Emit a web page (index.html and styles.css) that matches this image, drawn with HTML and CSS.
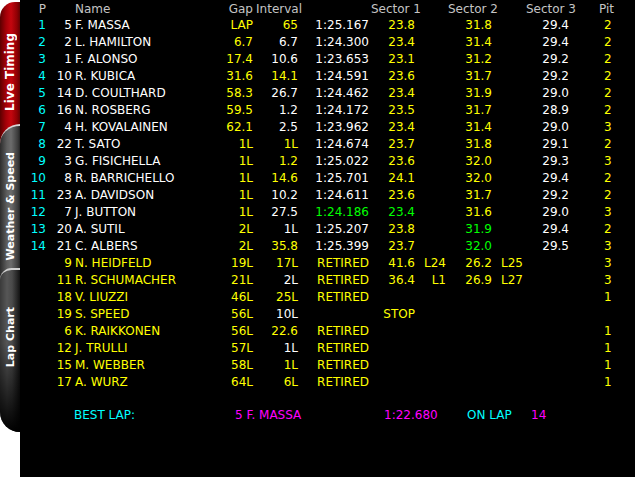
FILE: index.html
```html
<!DOCTYPE html>
<html lang="en">
<head>
    <meta charset="utf-8">
    <title>Live Timing</title>
    <link rel="stylesheet" href="styles.css">
</head>
<body>
<div class="screen">
    <nav class="tabs">
        <div class="tab tab-live"><span>Live Timing</span></div>
        <div class="tab tab-weather"><span>Weather &amp; Speed</span></div>
        <div class="tab tab-lap"><span>Lap Chart</span></div>
    </nav>

    <main class="timing">
        <div class="row head">
            <span>P</span><span></span><span class="name">Name</span><span>Gap</span>
            <span class="h-int">Interval</span><span></span>
            <span class="h-s1">Sector 1</span><span></span>
            <span class="h-s2">Sector 2</span><span></span>
            <span class="h-s3">Sector 3</span><span class="pit h-pit">Pit</span>
        </div>

        <div class="row"><span class="c">1</span><span class="w">5</span><span class="name w">F. MASSA</span><span class="y">LAP</span><span class="y">65</span><span class="w">1:25.167</span><span class="y">23.8</span><span></span><span class="y">31.8</span><span></span><span class="w">29.4</span><span class="pit y">2</span></div>
        <div class="row"><span class="c">2</span><span class="w">2</span><span class="name w">L. HAMILTON</span><span class="y">6.7</span><span class="w">6.7</span><span class="w">1:24.300</span><span class="y">23.4</span><span></span><span class="y">31.4</span><span></span><span class="w">29.4</span><span class="pit y">2</span></div>
        <div class="row"><span class="c">3</span><span class="w">1</span><span class="name w">F. ALONSO</span><span class="y">17.4</span><span class="w">10.6</span><span class="w">1:23.653</span><span class="y">23.1</span><span></span><span class="y">31.2</span><span></span><span class="w">29.2</span><span class="pit y">2</span></div>
        <div class="row"><span class="c">4</span><span class="w">10</span><span class="name w">R. KUBICA</span><span class="y">31.6</span><span class="y">14.1</span><span class="w">1:24.591</span><span class="y">23.6</span><span></span><span class="y">31.7</span><span></span><span class="w">29.2</span><span class="pit y">2</span></div>
        <div class="row"><span class="c">5</span><span class="w">14</span><span class="name w">D. COULTHARD</span><span class="y">58.3</span><span class="w">26.7</span><span class="w">1:24.462</span><span class="y">23.4</span><span></span><span class="y">31.9</span><span></span><span class="w">29.0</span><span class="pit y">2</span></div>
        <div class="row"><span class="c">6</span><span class="w">16</span><span class="name w">N. ROSBERG</span><span class="y">59.5</span><span class="w">1.2</span><span class="w">1:24.172</span><span class="y">23.5</span><span></span><span class="y">31.7</span><span></span><span class="w">28.9</span><span class="pit y">2</span></div>
        <div class="row"><span class="c">7</span><span class="w">4</span><span class="name w">H. KOVALAINEN</span><span class="y">62.1</span><span class="w">2.5</span><span class="w">1:23.962</span><span class="y">23.4</span><span></span><span class="y">31.4</span><span></span><span class="w">29.0</span><span class="pit y">3</span></div>
        <div class="row"><span class="c">8</span><span class="w">22</span><span class="name w">T. SATO</span><span class="y">1L</span><span class="y">1L</span><span class="w">1:24.674</span><span class="y">23.7</span><span></span><span class="y">31.8</span><span></span><span class="w">29.1</span><span class="pit y">2</span></div>
        <div class="row"><span class="c">9</span><span class="w">3</span><span class="name w">G. FISICHELLA</span><span class="y">1L</span><span class="y">1.2</span><span class="w">1:25.022</span><span class="y">23.6</span><span></span><span class="y">32.0</span><span></span><span class="w">29.3</span><span class="pit y">3</span></div>
        <div class="row"><span class="c">10</span><span class="w">8</span><span class="name w">R. BARRICHELLO</span><span class="y">1L</span><span class="y">14.6</span><span class="w">1:25.701</span><span class="y">24.1</span><span></span><span class="y">32.0</span><span></span><span class="w">29.4</span><span class="pit y">2</span></div>
        <div class="row"><span class="c">11</span><span class="w">23</span><span class="name w">A. DAVIDSON</span><span class="y">1L</span><span class="w">10.2</span><span class="w">1:24.611</span><span class="y">23.6</span><span></span><span class="y">31.7</span><span></span><span class="w">29.2</span><span class="pit y">2</span></div>
        <div class="row"><span class="c">12</span><span class="w">7</span><span class="name w">J. BUTTON</span><span class="y">1L</span><span class="w">27.5</span><span class="g">1:24.186</span><span class="g">23.4</span><span></span><span class="y">31.6</span><span></span><span class="w">29.0</span><span class="pit y">3</span></div>
        <div class="row"><span class="c">13</span><span class="w">20</span><span class="name w">A. SUTIL</span><span class="y">2L</span><span class="w">1L</span><span class="w">1:25.207</span><span class="y">23.8</span><span></span><span class="g">31.9</span><span></span><span class="w">29.4</span><span class="pit y">2</span></div>
        <div class="row"><span class="c">14</span><span class="w">21</span><span class="name w">C. ALBERS</span><span class="y">2L</span><span class="y">35.8</span><span class="w">1:25.399</span><span class="y">23.7</span><span></span><span class="g">32.0</span><span></span><span class="w">29.5</span><span class="pit y">3</span></div>

        <div class="row"><span></span><span class="y">9</span><span class="name y">N. HEIDFELD</span><span class="y">19L</span><span class="y">17L</span><span class="y">RETIRED</span><span class="y">41.6</span><span class="y">L24</span><span class="y">26.2</span><span class="lap y">L25</span><span></span><span class="pit y">3</span></div>
        <div class="row"><span></span><span class="y">11</span><span class="name y">R. SCHUMACHER</span><span class="y">21L</span><span class="w">2L</span><span class="y">RETIRED</span><span class="y">36.4</span><span class="y">L1</span><span class="y">26.9</span><span class="lap y">L27</span><span></span><span class="pit y">3</span></div>
        <div class="row"><span></span><span class="y">18</span><span class="name y">V. LIUZZI</span><span class="y">46L</span><span class="y">25L</span><span class="y">RETIRED</span><span></span><span></span><span></span><span></span><span></span><span class="pit y">1</span></div>
        <div class="row"><span></span><span class="y">19</span><span class="name y">S. SPEED</span><span class="y">56L</span><span class="w">10L</span><span></span><span class="y">STOP</span><span></span><span></span><span></span><span></span><span></span></div>
        <div class="row"><span></span><span class="y">6</span><span class="name y">K. RAIKKONEN</span><span class="y">56L</span><span class="y">22.6</span><span class="y">RETIRED</span><span></span><span></span><span></span><span></span><span></span><span class="pit y">1</span></div>
        <div class="row"><span></span><span class="y">12</span><span class="name y">J. TRULLI</span><span class="y">57L</span><span class="w">1L</span><span class="y">RETIRED</span><span></span><span></span><span></span><span></span><span></span><span class="pit y">1</span></div>
        <div class="row"><span></span><span class="y">15</span><span class="name y">M. WEBBER</span><span class="y">58L</span><span class="y">1L</span><span class="y">RETIRED</span><span></span><span></span><span></span><span></span><span></span><span class="pit y">1</span></div>
        <div class="row"><span></span><span class="y">17</span><span class="name y">A. WURZ</span><span class="y">64L</span><span class="y">6L</span><span class="y">RETIRED</span><span></span><span></span><span></span><span></span><span></span><span class="pit y">1</span></div>

        <div class="best">
            <span class="b-label c">BEST LAP:</span>
            <span class="b-driver m">5 F. MASSA</span>
            <span class="b-time m">1:22.680</span>
            <span class="b-on c">ON LAP</span>
            <span class="m">14</span>
        </div>
    </main>
</div>
</body>
</html>
```

FILE: styles.css
```css
body {
    margin: 0;
    background: #fff;
    font-family: "DejaVu Sans", sans-serif;
    font-size: 12px;
}

.screen {
    display: flex;
    height: 477px;
}

/* side tabs */

.tabs {
    width: 20px;
    display: flex;
    flex-direction: column;
    flex-shrink: 0;
}

.tab {
    position: relative;
    box-sizing: border-box;
    display: flex;
    align-items: center;
    justify-content: center;
    color: #fff;
    font-weight: bold;
    font-size: 11px;
}

.tab span {
    writing-mode: vertical-rl;
    transform: rotate(180deg);
    white-space: nowrap;
}

.tab-live {
    margin-top: 2px;
    height: 143px;
    padding-bottom: 3px;
    border-radius: 15px 0 0 0;
    background: linear-gradient(to right, #5c0000, #a40008 30%, #c4060e 55%, #8e0004 85%, #600000);
    font-size: 12px;
    z-index: 1;
}

.tab-weather {
    margin-top: -21px;
    height: 166px;
    padding-bottom: 4px;
    border-top: 2px solid #d6d6d6;
    border-radius: 20px 0 0 0;
    background: linear-gradient(to right, #2c2c2c, #5e5e5e 35%, #6c6c6c 55%, #3a3a3a 90%, #222);
    z-index: 2;
}

.tab-lap {
    margin-top: -22px;
    height: 164px;
    padding-bottom: 28px;
    border-top: 2px solid #d0d0d0;
    border-radius: 20px 0 0 34px;
    background:
        linear-gradient(to bottom, rgba(0, 0, 0, 0) 45%, #000 100%),
        linear-gradient(to right, #3a3a3a, #565656 35%, #4a4a4a 60%, #202020 90%, #111);
    z-index: 3;
}

/* timing table */

.timing {
    flex: 1;
    background: #000;
    padding-top: 1px;
}

.row {
    display: grid;
    grid-template-columns: 26px 26px 146px 35px 45px 71px 46px 31px 46px 28px 49px 66px;
    line-height: 17px;
    white-space: nowrap;
    text-align: right;
}

.row .name {
    text-align: left;
    padding-left: 3px;
}

.row .lap {
    text-align: left;
    padding-left: 9px;
}

.row .pit {
    text-align: left;
    padding-left: 35px;
}

.head {
    line-height: 16px;
    color: #c4c4c4;
}

.head .h-int {
    margin-right: -4px;
}

.head .h-s1,
.head .h-s2 {
    margin-right: -6px;
}

.head .h-s3 {
    margin-right: -7px;
}

.head .h-pit {
    padding-left: 30px;
}

.best {
    display: flex;
    margin-top: 16px;
    padding-left: 54px;
    line-height: 17px;
    white-space: nowrap;
}

.b-label {
    width: 161px;
}

.b-driver {
    width: 149px;
}

.b-time {
    width: 83px;
}

.b-on {
    width: 64px;
}

.y { color: #ffff00; }
.w { color: #ffffff; }
.c { color: #00ffff; }
.g { color: #00ff00; }
.m { color: #ff00ff; }
```
